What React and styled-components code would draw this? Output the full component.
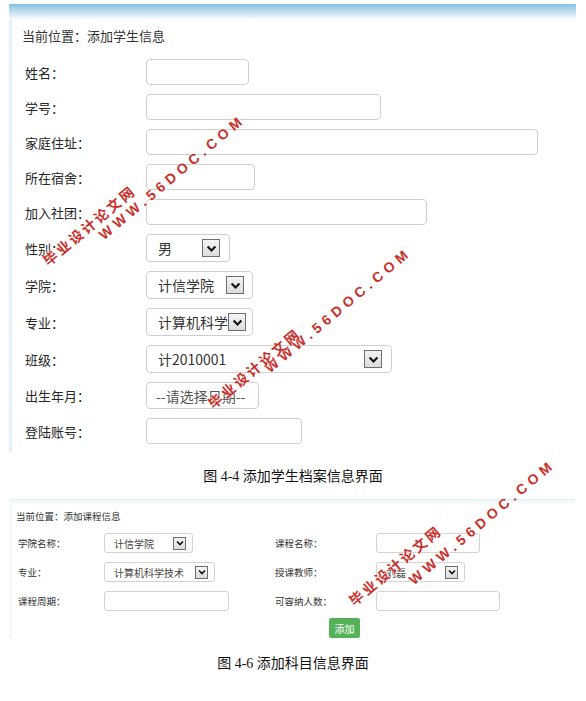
import React from 'react';
import styled, { createGlobalStyle } from 'styled-components';

const GlobalStyle = createGlobalStyle`
  body {
    margin: 0;
    background: #fff;
    font-family: "Noto Sans CJK SC", "Noto Sans", sans-serif;
    color: #333;
  }
`;

// page wrapper
const Page = styled.div`
  position: relative;
  width: 586px;
  height: 701px;
  overflow: hidden;
  padding: 4px 0 0 9px;
  box-sizing: border-box;
`;

const Panel = styled.div`
  width: ${(p) => p.$width}px;
`;

const TopBar = styled.div`
  height: ${(p) => p.$height}px;
  background: linear-gradient(to bottom, ${(p) => p.$from}, #fff);
`;

const Content = styled.div`
  border-left: 3px solid ${(p) => p.$edge};
  padding: ${(p) => p.$pad};
`;

const Crumb = styled.div`
  font-size: ${(p) => p.$size}px;
  line-height: ${(p) => p.$line}px;
  color: #333;
  padding-top: ${(p) => p.$top}px;
`;

/* ---------- big form (figure 4-4) ---------- */
const StudentForm = styled.div`
  display: flex;
  flex-direction: column;
  gap: 9px;
  margin-top: 14px;
  padding-left: 3px;
`;

const Row = styled.div`
  display: flex;
  align-items: center;
`;

const Label = styled.div`
  width: 121px;
  font-size: 13px;
  color: #262626;
`;

const Input = styled.div`
  width: ${(p) => p.$w}px;
  height: ${(p) => p.$h || 26}px;
  box-sizing: border-box;
  border: 1px solid #cfcfcf;
  border-radius: 4px;
  background: #fff;
  display: flex;
  align-items: center;
  padding-left: 9px;
  font-size: 14px;
  color: #555;
`;

const Select = styled.div`
  width: ${(p) => p.$w}px;
  height: 28px;
  box-sizing: border-box;
  border: 1px solid #cfcfcf;
  border-radius: 4px;
  display: flex;
  align-items: center;
  padding-left: 11px;
  font-size: 14px;
  color: #333;
`;

const SelectText = styled.span`
  flex: 1;
  white-space: nowrap;
`;

const Arrow = styled.span`
  width: ${(p) => p.$s}px;
  height: ${(p) => p.$s}px;
  box-sizing: border-box;
  border: 1px solid #6d6d6d;
  background: linear-gradient(#f4f4f4, #dcdcdc);
  display: flex;
  align-items: center;
  justify-content: center;
  margin-right: ${(p) => p.$mr}px;
  flex-shrink: 0;
`;

const Caption = styled.div`
  text-align: center;
  font-family: "Liberation Serif", "Noto Sans CJK SC", serif;
  font-size: 14px;
  line-height: 14px;
  color: #111;
  padding: ${(p) => p.$pad};
  margin-left: -9px;
`;

/* ---------- small form (figure 4-6) ---------- */
const CourseGrid = styled.div`
  display: grid;
  grid-template-columns: 86px 171px 101px auto;
  row-gap: 9px;
  align-items: center;
  margin-top: 11px;
  padding-left: 2px;
`;

const SmallLabel = styled.div`
  font-size: 9.5px;
  color: #333;
`;

const SmallInput = styled.div`
  width: ${(p) => p.$w}px;
  height: 20px;
  box-sizing: border-box;
  border: 1px solid #d3d3d3;
  border-radius: 3px;
`;

const SmallSelect = styled.div`
  width: ${(p) => p.$w}px;
  height: 20px;
  box-sizing: border-box;
  border: 1px solid #d3d3d3;
  border-radius: 3px;
  display: flex;
  align-items: center;
  padding-left: 9px;
  font-size: 10px;
  color: #444;
`;

const AddButton = styled.button`
  margin: 7px 0 0 313px;
  width: 31px;
  height: 20px;
  padding: 0;
  border: none;
  border-radius: 2px;
  background: #56b25a;
  color: #fff;
  font-family: inherit;
  font-size: 10px;
`;

// watermark overlay
const Mark = styled.div`
  position: absolute;
  left: ${(p) => p.$x}px;
  top: ${(p) => p.$y}px;
  transform: translate(-50%, -50%) rotate(-40deg);
  white-space: nowrap;
  font-family: ${(p) => (p.$cjk ? '"Noto Sans CJK SC", sans-serif' : '"Liberation Sans", sans-serif')};
  font-weight: bold;
  font-size: 14px;
  letter-spacing: ${(p) => (p.$cjk ? 2.5 : 4.6)}px;
  color: #c9302c;
  text-shadow: 0 0 2px #fff, 0 0 1px #fff;
  pointer-events: none;
`;

const Chevron = ({ size }) => (
  <svg width={size} height={size} viewBox="0 0 10 10">
    <path d="M2 3.5 L5 6.5 L8 3.5" fill="none" stroke="#111" strokeWidth="1.6" />
  </svg>
);

const BigSelect = ({ w, text, mr }) => (
  <Select $w={w}>
    <SelectText>{text}</SelectText>
    <Arrow $s={18} $mr={mr}>
      <Chevron size={13} />
    </Arrow>
  </Select>
);

const LittleSelect = ({ w, text, mr }) => (
  <SmallSelect $w={w}>
    <SelectText>{text}</SelectText>
    <Arrow $s={13} $mr={mr}>
      <Chevron size={10} />
    </Arrow>
  </SmallSelect>
);

const watermarks = [
  { x: 172, y: 177, t: 'WWW.56DOC.COM' },
  { x: 89, y: 225, t: '毕业设计论文网', cjk: true },
  { x: 338, y: 310, t: 'WWW.56DOC.COM' },
  { x: 254, y: 368, t: '毕业设计论文网', cjk: true },
  { x: 482, y: 522, t: 'WWW.56DOC.COM' },
  { x: 395, y: 565, t: '毕业设计论文网', cjk: true },
];

export default function App() {
  return (
    <Page>
      <GlobalStyle />
      <Panel $width={567}>
        <TopBar $height={16} $from="#86c0e3" />
        <Content $edge="#e4f0f9" $pad="0 0 8px 10px">
          <Crumb $size={13} $line={18} $top={7}>当前位置：添加学生信息</Crumb>
          <StudentForm>
            <Row><Label>姓名：</Label><Input $w={103} /></Row>
            <Row><Label>学号：</Label><Input $w={235} /></Row>
            <Row><Label>家庭住址：</Label><Input $w={392} /></Row>
            <Row><Label>所在宿舍：</Label><Input $w={109} /></Row>
            <Row><Label>加入社团：</Label><Input $w={281} /></Row>
            <Row><Label>性别：</Label><BigSelect w={84} text="男" mr={9} /></Row>
            <Row><Label>学院：</Label><BigSelect w={107} text="计信学院" mr={8} /></Row>
            <Row><Label>专业：</Label><BigSelect w={107} text="计算机科学" mr={8} /></Row>
            <Row><Label>班级：</Label><BigSelect w={246} text="计2010001" mr={9} /></Row>
            <Row><Label>出生年月：</Label><Input $w={113} $h={27}>--请选择日期--</Input></Row>
            <Row><Label>登陆账号：</Label><Input $w={156} /></Row>
          </StudentForm>
        </Content>
      </Panel>
      <Caption $pad="18px 0 15px">图 4-4 添加学生档案信息界面</Caption>
      <Panel $width={566}>
        <TopBar $height={6} $from="#e6f1f8" />
        <Content $edge="#f6f9fc" $pad="0 0 0 4px">
          <Crumb $size={9.5} $line={12} $top={5}>当前位置：添加课程信息</Crumb>
          <CourseGrid>
            <SmallLabel>学院名称：</SmallLabel>
            <LittleSelect w={89} text="计信学院" mr={6} />
            <SmallLabel>课程名称：</SmallLabel>
            <SmallInput $w={104} />
            <SmallLabel>专业：</SmallLabel>
            <LittleSelect w={111} text="计算机科学技术" mr={6} />
            <SmallLabel>授课教师：</SmallLabel>
            <LittleSelect w={89} text="刘磊" mr={6} />
            <SmallLabel>课程周期：</SmallLabel>
            <SmallInput $w={125} />
            <SmallLabel>可容纳人数：</SmallLabel>
            <SmallInput $w={124} />
          </CourseGrid>
          <AddButton>添加</AddButton>
        </Content>
      </Panel>
      <Caption $pad="19px 0 0">图 4-6 添加科目信息界面</Caption>
      {watermarks.map((m, i) => (
        <Mark key={i} $x={m.x} $y={m.y} $cjk={m.cjk}>{m.t}</Mark>
      ))}
    </Page>
  );
}
